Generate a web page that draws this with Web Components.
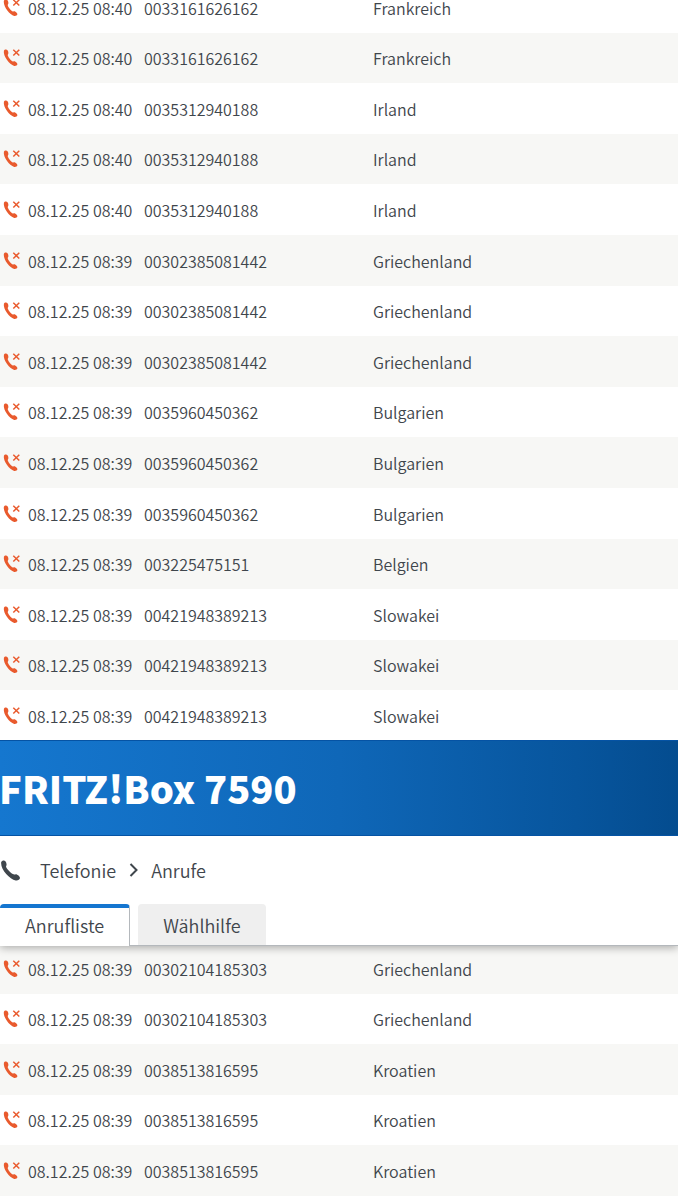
<!DOCTYPE html>
<html lang="de">
<head>
    <meta charset="UTF-8">
    <meta name="viewport" content="width=device-width, initial-scale=1.0">
    <title>FRITZ!Box 7590</title>
    <style>
        body {
            margin: 0;
            overflow-x: hidden;
            background: #fff;
            color: #3f464c;
            font-family: "Noto Sans CJK SC", "Noto Sans", sans-serif;
            font-size: 16px;
            font-weight: 350;
        }
        /* the list is scrolled a bit under the top edge */
        call-list.top {
            margin-top: -18px;
        }
    </style>
</head>
<body>
    <call-list class="top" id="earlier"></call-list>

    <box-header>
        <span slot="title">FRITZ!Box 7590</span>
        <bread-crumb slot="nav">
            <a href="#telefonie">Telefonie</a>
            <a href="#anrufe" slot="current">Anrufe</a>
        </bread-crumb>
        <tab-item slot="tabs" active>Anrufliste</tab-item>
        <tab-item slot="tabs">Wählhilfe</tab-item>
    </box-header>

    <call-list id="later"></call-list>

    <script>

        class CallIcon extends HTMLElement {
            constructor() {
                super();
                this.attachShadow({mode:'open'}).innerHTML = `
                    <style>
                        :host { display: block; width: 20px; height: 20px; color: #e95a2d; }
                        svg { display: block; }
                    </style>
                    <svg width="20" height="20" viewBox="0 0 20 20" role="img" aria-label="Anruf in Abwesenheit">
                        <path fill="currentColor" d="M3.900 3.800C4.500 2.300 6.900 2.200 7.700 3.600 8.500 5 8.700 6.600 7.900 7.600c-.4.700.1 1.600.7 2.600 1.100 1.800 2.600 3.500 4.100 4.300.8.300 1.500-.3 2.300-.1 1.200.4 2.500 1.800 2.400 2.900-.2 1.200-1.900 1.900-3.200 1.600C9.500 17.800 2.900 9 3.900 3.800z"/>
                        <path fill="none" stroke="currentColor" stroke-width="1.500" d="M13.300 2.800l6 5.700M19.300 2.800l-6 5.700"/>
                    </svg>
                `;
            }
        }
        window.customElements.define('call-icon', CallIcon);

        class CallList extends HTMLElement {
            constructor() {
                super();
                this.attachShadow({mode:'open'});
            }

            set calls(list) {
                let rows = list.map(([date, number, place]) => `
                    <tr>
                        <td><call-icon></call-icon></td>
                        <td>${date}</td>
                        <td>${number}</td>
                        <td>${place}</td>
                    </tr>`).join('');
                this.shadowRoot.innerHTML = `
                    <style>
                        :host { display: block; }
                        table { width: 100%; table-layout: fixed; border-collapse: collapse; }
                        tr { height: 51px; }
                        tr:nth-child(5n+2), tr:nth-child(5n+4) { height: 50px; }
                        :host(.top) tr:nth-child(even), :host(:not(.top)) tr:nth-child(2n+3), :host(:not(.top)) tr:first-child { background: #f7f7f5; }
                        td { padding: 0; line-height: 24px; white-space: nowrap; }
                        call-icon { margin-bottom: 2px; }
                        .icon { width: 28px; }
                        .date { width: 116px; }
                        .number { width: 229px; }
                    </style>
                    <table aria-label="Anrufliste">
                        <colgroup><col class="icon"><col class="date"><col class="number"><col></colgroup>
                        <tbody>${rows}</tbody>
                    </table>
                `;
            }
        }
        window.customElements.define('call-list', CallList);

        class BreadCrumb extends HTMLElement {
            constructor() {
                super();
                this.attachShadow({mode:'open'}).innerHTML = `
                    <style>
                        :host { display: flex; align-items: center; height: 68px; font-size: 18px; }
                        .phone { width: 21px; height: 21px; margin-right: 19px; }
                        .arrow { width: 9px; height: 14px; margin: 0 13px; }
                        ::slotted(a) { color: inherit; text-decoration: none; }
                    </style>
                    <svg class="phone" viewBox="0 0 21 21" aria-hidden="true">
                        <path fill="currentColor" d="M1.200 2.100C1.900.3 4.400-.2 5.400 1.200c1.100 1.500 1.600 3.500.8 4.800-.5.900.3 1.900 1.300 3.200 1.800 2.200 3.800 4.100 5.900 5.100 1.100.5 1.900-.4 3-.1 1.700.6 3.700 2.500 3.600 3.900-.2 1.700-2.500 2.700-4.300 2.300C9.600 19 .2 9.300 1.200 2.100z"/>
                    </svg>
                    <slot></slot>
                    <svg class="arrow" viewBox="0 0 9 14" aria-hidden="true">
                        <path fill="none" stroke="currentColor" stroke-width="2" d="M1.500 1L7.500 7l-6 6"/>
                    </svg>
                    <slot name="current"></slot>
                `;
            }
        }
        window.customElements.define('bread-crumb', BreadCrumb);

        class TabItem extends HTMLElement {
            constructor() {
                super();
                this.attachShadow({mode:'open'}).innerHTML = `
                    <style>
                        :host { display: block; }
                        button {
                            display: block;
                            box-sizing: border-box;
                            height: 41px;
                            margin: 0;
                            padding: 0 25px 3px;
                            border: 0;
                            border-top: 4px solid #efefef;
                            border-radius: 4px 4px 0 0;
                            background: #efefef;
                            color: inherit;
                            font: inherit;
                            font-size: 18px;
                            line-height: 34px;
                        }
                        :host([active]) button {
                            height: 42px;
                            padding-bottom: 4px;
                            border-top-color: #1576d0;
                            border-right: 1px solid #b4b8bc;
                            background: #fff;
                        }
                    </style>
                    <button type="button"><slot></slot></button>
                `;
            }
        }
        window.customElements.define('tab-item', TabItem);

        class BoxHeader extends HTMLElement {
            constructor() {
                super();
                this.attachShadow({mode:'open'}).innerHTML = `
                    <style>
                        :host {
                            display: block;
                            position: relative;
                            margin: -1px 0 -3px;
                            background: #fff;
                            box-shadow: 0 2px 8px rgba(0, 0, 0, .3);
                            clip-path: inset(0 0 -12px 0);
                        }
                        .bar {
                            display: flex;
                            align-items: center;
                            box-sizing: border-box;
                            height: 96px;
                            border: solid #0553a4;
                            border-width: 1px 0;
                            background: linear-gradient(90deg, #1577cf, #0f67b8 50%, #07559d 85%, #044c8f);
                        }
                        h1 { margin: 0 0 0 -1px; color: #fff; font-size: 38px; font-weight: 900; line-height: 48px; white-space: nowrap; }
                        .tabs { display: flex; align-items: flex-start; gap: 8px; height: 42px; background: linear-gradient(#b4b8bc, #b4b8bc) bottom / 100% 1px no-repeat; }
                    </style>
                    <div class="bar"><h1><slot name="title"></slot></h1></div>
                    <slot name="nav"></slot>
                    <div class="tabs"><slot name="tabs"></slot></div>
                `;
            }
        }
        window.customElements.define('box-header', BoxHeader);

        document.getElementById('earlier').calls = [
            ['08.12.25 08:40', '0033161626162', 'Frankreich'],
            ['08.12.25 08:40', '0033161626162', 'Frankreich'],
            ['08.12.25 08:40', '0035312940188', 'Irland'],
            ['08.12.25 08:40', '0035312940188', 'Irland'],
            ['08.12.25 08:40', '0035312940188', 'Irland'],
            ['08.12.25 08:39', '00302385081442', 'Griechenland'],
            ['08.12.25 08:39', '00302385081442', 'Griechenland'],
            ['08.12.25 08:39', '00302385081442', 'Griechenland'],
            ['08.12.25 08:39', '0035960450362', 'Bulgarien'],
            ['08.12.25 08:39', '0035960450362', 'Bulgarien'],
            ['08.12.25 08:39', '0035960450362', 'Bulgarien'],
            ['08.12.25 08:39', '003225475151', 'Belgien'],
            ['08.12.25 08:39', '00421948389213', 'Slowakei'],
            ['08.12.25 08:39', '00421948389213', 'Slowakei'],
            ['08.12.25 08:39', '00421948389213', 'Slowakei']
        ];

        document.getElementById('later').calls = [
            ['08.12.25 08:39', '00302104185303', 'Griechenland'],
            ['08.12.25 08:39', '00302104185303', 'Griechenland'],
            ['08.12.25 08:39', '0038513816595', 'Kroatien'],
            ['08.12.25 08:39', '0038513816595', 'Kroatien'],
            ['08.12.25 08:39', '0038513816595', 'Kroatien']
        ];

    </script>
</body>
</html>
